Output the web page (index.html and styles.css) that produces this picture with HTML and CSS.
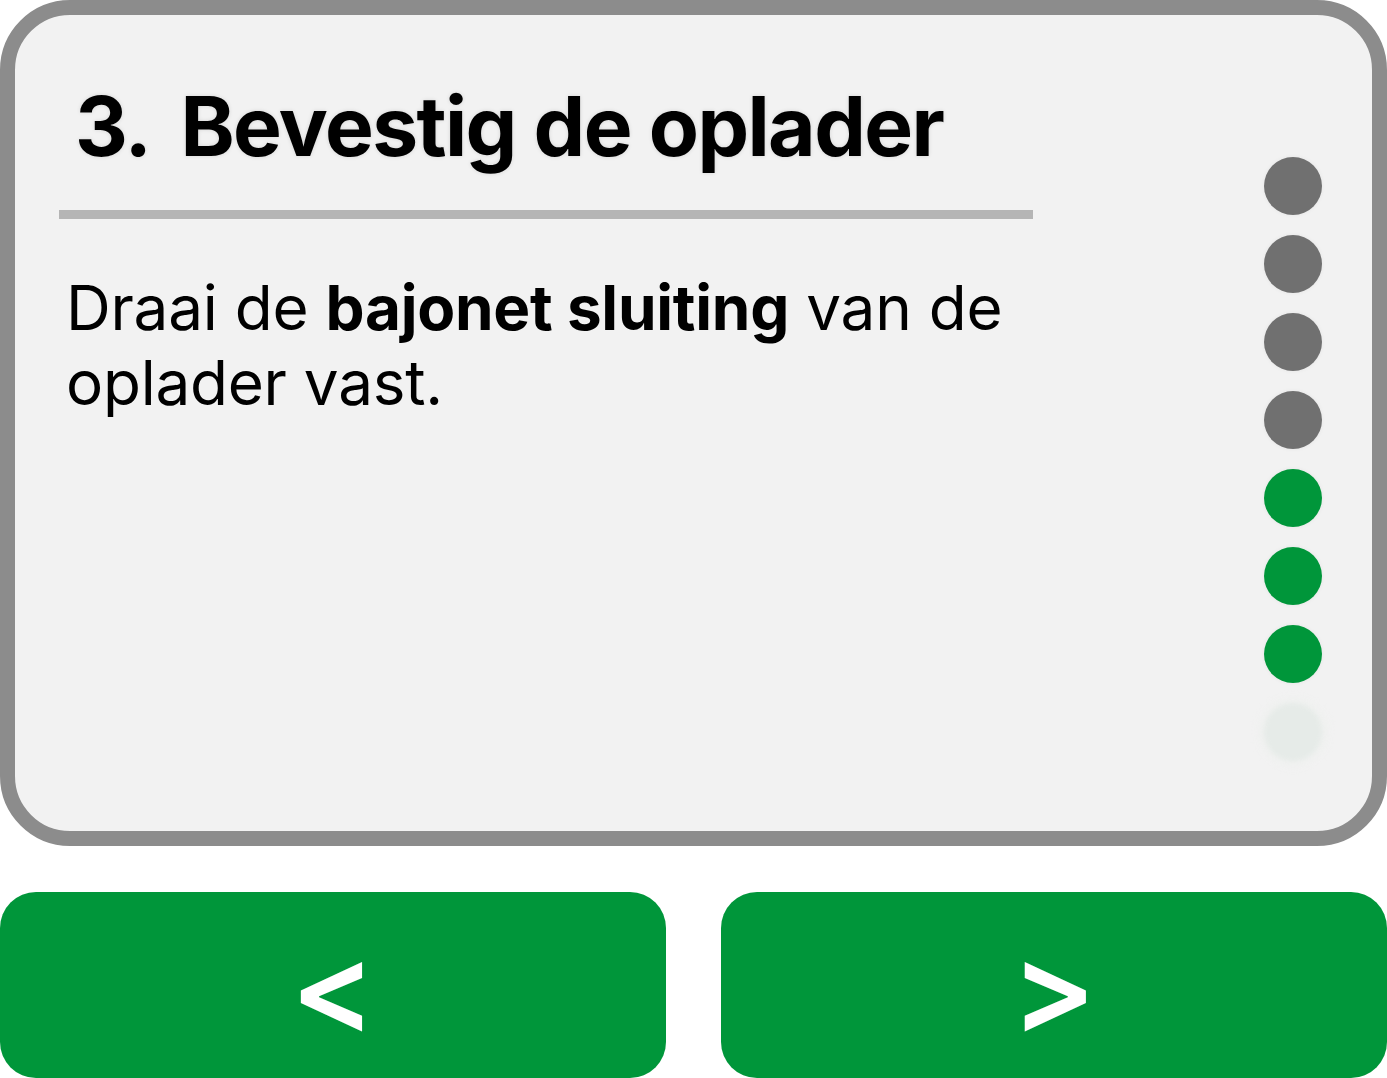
FILE: index.html
```html
<!DOCTYPE html>
<html lang="nl">
<head>
<meta charset="utf-8">
<title>Bevestig de oplader</title>
<link rel="stylesheet" href="styles.css">
</head>
<body>
<div class="screen">
  <section class="card">
    <div class="main">
      <h1 class="title"><span class="num">3.</span>Bevestig de oplader</h1>
      <div class="divider"></div>
      <p class="text">Draai de <b>bajonet sluiting</b> van de oplader vast.</p>
    </div>
    <div class="dots">
      <span class="dot gray"></span>
      <span class="dot gray"></span>
      <span class="dot gray"></span>
      <span class="dot gray"></span>
      <span class="dot green"></span>
      <span class="dot green"></span>
      <span class="dot green"></span>
      <span class="dot faint"></span>
    </div>
  </section>
  <nav class="buttons">
    <button class="btn">&lt;</button>
    <button class="btn">&gt;</button>
  </nav>
</div>
</body>
</html>
```

FILE: styles.css
```css
html, body {
  margin: 0;
  padding: 0;
  background: #ffffff;
}

body {
  font-family: Inter, "Noto Sans", "Liberation Sans", sans-serif;
  color: #000;
}

.screen {
  width: 1387px;
  height: 1078px;
  display: flex;
  flex-direction: column;
  gap: 46px;
}

.card {
  box-sizing: border-box;
  height: 846px;
  border: 15px solid #8c8c8c;
  border-radius: 70px;
  background: #f2f2f2;
  display: flex;
  justify-content: space-between;
  padding: 62px 50px 0 44px;
}

.main {
  width: 974px;
  display: flex;
  flex-direction: column;
}

.title {
  margin: 0 0 33px 16px;
  font-size: 82px;
  line-height: 100px;
  font-weight: 700;
  letter-spacing: -1.6px;
  text-shadow: 0 0 4px rgba(0, 0, 0, 0.12);
}

.num {
  margin-right: 30px;
}

.divider {
  height: 9px;
  background: #b5b5b5;
}

.text {
  margin: 51px 0 0 7px;
  font-size: 62px;
  line-height: 75px;
  font-weight: 400;
  letter-spacing: -0.25px;
  width: 960px;
}

.text b {
  font-weight: 700;
}

.dots {
  display: flex;
  flex-direction: column;
  gap: 20px;
  padding-top: 80px;
}

.dot {
  width: 58px;
  height: 58px;
  border-radius: 50%;
  box-shadow: 0 0 4px rgba(0, 0, 0, 0.06);
}

.gray { background: #707070; }
.green { background: #00963a; }
.faint {
  background: #e6ebe8;
  box-shadow: 0 0 10px 4px #eef0ee;
  filter: blur(2px);
}

.buttons {
  display: flex;
  gap: 55px;
  height: 186px;
}

.btn {
  flex: 1;
  border: none;
  border-radius: 36px;
  background: #00963a;
  color: #fff;
  font-family: Inter, "Liberation Sans", sans-serif;
  font-size: 126px;
  font-weight: 600;
  line-height: 1;
  padding: 4px 0 0 0;
}
```
